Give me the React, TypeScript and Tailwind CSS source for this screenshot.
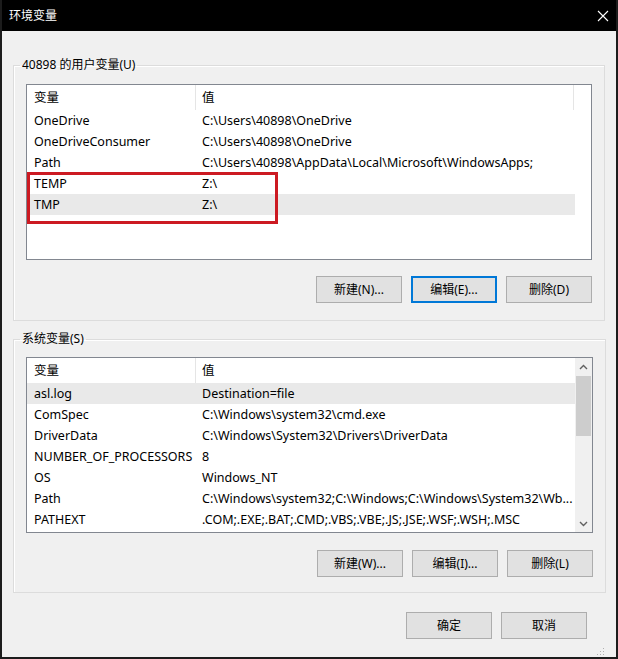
import React from "react";

type Row = { name: string; value: string; selected?: boolean };

const USER_VARS: Row[] = [
  { name: "OneDrive", value: "C:\\Users\\40898\\OneDrive" },
  { name: "OneDriveConsumer", value: "C:\\Users\\40898\\OneDrive" },
  { name: "Path", value: "C:\\Users\\40898\\AppData\\Local\\Microsoft\\WindowsApps;" },
  { name: "TEMP", value: "Z:\\" },
  { name: "TMP", value: "Z:\\", selected: true },
];

const SYSTEM_VARS: Row[] = [
  { name: "asl.log", value: "Destination=file", selected: true },
  { name: "ComSpec", value: "C:\\Windows\\system32\\cmd.exe" },
  { name: "DriverData", value: "C:\\Windows\\System32\\Drivers\\DriverData" },
  { name: "NUMBER_OF_PROCESSORS", value: "8" },
  { name: "OS", value: "Windows_NT" },
  { name: "Path", value: "C:\\Windows\\system32;C:\\Windows;C:\\Windows\\System32\\Wb..." },
  { name: "PATHEXT", value: ".COM;.EXE;.BAT;.CMD;.VBS;.VBE;.JS;.JSE;.WSF;.WSH;.MSC" },
];

function Chevron({ up }: { up?: boolean }) {
  return (
    <svg width="9" height="6" viewBox="0 0 9 6" className={up ? "" : "rotate-180"}>
      <path d="M1 5 L4.5 1.5 L8 5" fill="none" stroke="#606060" strokeWidth="1.4" />
    </svg>
  );
}

function VarList({ rows, scrollbar, children }: { rows: Row[]; scrollbar?: boolean; children?: React.ReactNode }) {
  return (
    <div className="relative flex h-[176px] border border-[#828790] bg-white text-[12.5px]">
      <div className="flex w-[548px] flex-col overflow-hidden">
        <div className="flex h-[25px] shrink-0 items-center">
          <div className="flex h-full w-[169px] items-center border-r border-[#e5e5e5] pt-[2px] pl-[7px]">变量</div>
          <div className={"flex h-full w-[378px] items-center pt-[2px] pl-[6px] " + (scrollbar ? "" : "border-r border-[#e5e5e5]")}>值</div>
        </div>
        {rows.map((r) => (
          <div
            key={r.name}
            className={"flex h-[21px] shrink-0 items-center whitespace-nowrap pt-[2px] " + (r.selected ? "bg-[#e9e9e9]" : "")}
          >
            <div className="w-[169px] pl-[7px]">{r.name}</div>
            <div className="w-[378px] pl-[6px]">{r.value}</div>
          </div>
        ))}
      </div>
      {scrollbar && (
        <div className="ml-auto flex w-[17px] flex-col bg-[#f0f0f0]">
          <div className="flex h-[17px] items-center justify-center">
            <Chevron up />
          </div>
          <div className="mx-px mt-px h-[60px] bg-[#cdcdcd]" />
          <div className="mt-auto flex h-[17px] items-center justify-center">
            <Chevron />
          </div>
        </div>
      )}
      {children}
    </div>
  );
}

function Btn({ label, focused }: { label: string; focused?: boolean }) {
  return (
    <button
      className={
        "flex h-[27px] w-[86px] items-center justify-center bg-[#e1e1e1] text-[12px] text-black " +
        (focused ? "border-2 border-[#0078d7]" : "border border-[#adadad]")
      }
    >
      {label}
    </button>
  );
}

function Group({ title, className, children }: { title: string; className?: string; children: React.ReactNode }) {
  return (
    <fieldset className={"border border-[#dcdcdc] px-[12px] shadow-[inset_1px_1px_0_#ffffff] " + (className ?? "")}>
      <legend className="-ml-[6px] px-[2px] text-[12px] leading-[16px]">{title}</legend>
      {children}
    </fieldset>
  );
}

export default function App() {
  return (
    <div className="flex h-[659px] w-[618px] flex-col border-x-2 border-b-2 border-[#1c1c1c] bg-[#f0f0f0] font-['Noto_Sans','Noto_Sans_CJK_SC',sans-serif] text-[12px] text-black">
      <div className="flex h-[31px] shrink-0 items-center justify-between bg-black pl-[7px] pr-[7px] text-white">
        <span>环境变量</span>
        <svg width="12" height="12" viewBox="0 0 12 12">
          <path d="M1 1 L11 11 M11 1 L1 11" stroke="#ffffff" strokeWidth="1.1" />
        </svg>
      </div>

      <div className="flex flex-1 flex-col px-[11px] pt-[26px]">
        <Group title="40898 的用户变量(U)" className="pt-[11px] pb-[17px]">
          <VarList rows={USER_VARS}>
            <div className="absolute top-[87px] left-0 h-[52px] w-[251px] border-[3px] border-[#cc1a22]" />
          </VarList>
          <div className="mt-[16px] flex justify-end gap-[9px]">
            <Btn label="新建(N)..." />
            <Btn label="编辑(E)..." focused />
            <Btn label="删除(D)" />
          </div>
        </Group>

        <Group title="系统变量(S)" className="mt-[10px] pt-[10px] pb-[15px]">
          <VarList rows={SYSTEM_VARS} scrollbar />
          <div className="mt-[17px] flex justify-end gap-[9px]">
            <Btn label="新建(W)..." />
            <Btn label="编辑(I)..." />
            <Btn label="删除(L)" />
          </div>
        </Group>

        <div className="mt-[19px] mr-[18px] flex justify-end gap-[9px]">
          <Btn label="确定" />
          <Btn label="取消" />
        </div>

        <div className="mt-auto mb-[1px] flex justify-end">
          <svg width="8" height="8" viewBox="0 0 8 8">
            <rect x="6" y="0" width="1" height="1" fill="#b0b0b0" />
            <rect x="3" y="3" width="1" height="1" fill="#b0b0b0" />
            <rect x="6" y="3" width="1" height="1" fill="#b0b0b0" />
            <rect x="0" y="6" width="1" height="1" fill="#b0b0b0" />
            <rect x="3" y="6" width="1" height="1" fill="#b0b0b0" />
            <rect x="6" y="6" width="1" height="1" fill="#b0b0b0" />
          </svg>
        </div>
      </div>
    </div>
  );
}
